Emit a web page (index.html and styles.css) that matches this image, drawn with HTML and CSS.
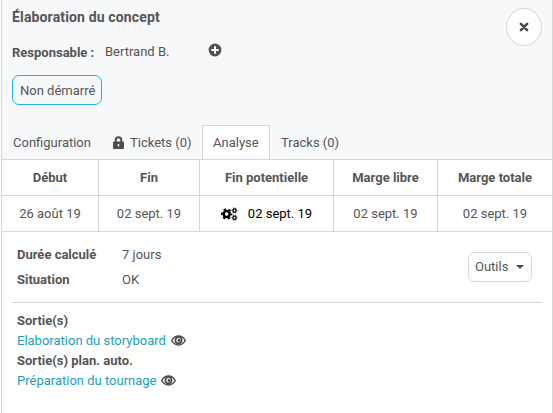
FILE: index.html
```html
<!DOCTYPE html>
<html lang="fr">
<head>
<meta charset="utf-8">
<title>Élaboration du concept</title>
<link rel="stylesheet" href="styles.css">
</head>
<body>
<svg width="0" height="0" class="defs">
  <symbol id="eye" viewBox="0 0 15 11"><path d="M.8 5.500C2.200 2.700 4.600 1.100 7.500 1.100s5.300 1.600 6.700 4.400c-1.400 2.800-3.800 4.400-6.700 4.400S2.200 8.300 .8 5.500z" fill="none" stroke="#4d4d4d" stroke-width="1.500"/><circle cx="7.500" cy="5.300" r="3.100" fill="none" stroke="#4d4d4d" stroke-width="1.700"/><circle cx="8" cy="5.500" r="1.400"/></symbol>
</svg>
<main class="panel">
  <header class="head">
    <div class="head-top">
      <div>
        <h1 class="title">Élaboration du concept</h1>
        <div class="owner">
          <span class="owner-label">Responsable :</span>
          <span class="owner-name">Bertrand B.</span>
          <svg class="plus" viewBox="0 0 14 14"><circle cx="7" cy="7" r="6.400"/><path d="M7 3.300v7.400M3.300 7h7.400"/></svg>
        </div>
      </div>
      <button class="close" aria-label="Fermer"><svg viewBox="0 0 10 10"><path d="M1.900 1.900l6.200 6.200M8.100 1.900L1.900 8.100"/></svg></button>
    </div>
    <span class="status">Non démarré</span>
    <nav class="tabs">
      <a class="tab">Configuration</a>
      <a class="tab tab-lock"><svg class="lock" viewBox="0 0 11 13"><path fill-rule="evenodd" d="M1.700 5.500V4a3.800 3.800 0 0 1 7.600 0v1.500h.500a1.200 1.200 0 0 1 1.200 1.200v5.100A1.200 1.200 0 0 1 9.800 13H1.200A1.200 1.200 0 0 1 0 11.800V6.700a1.200 1.200 0 0 1 1.200-1.200zM3.700 5.500h3.600V4a1.800 1.800 0 0 0-3.600 0zM4.800 8v2.500h1.400V8z"/></svg>Tickets (0)</a>
      <a class="tab active">Analyse</a>
      <a class="tab">Tracks (0)</a>
    </nav>
  </header>
  <table class="dates">
    <colgroup><col class="c1"><col class="c2"><col class="c3"><col class="c4"><col class="c5"></colgroup>
    <tr><th>Début</th><th>Fin</th><th>Fin potentielle</th><th>Marge libre</th><th>Marge totale</th></tr>
    <tr><td>26 août 19</td><td>02 sept. 19</td>
      <td class="auto"><svg class="cogs" viewBox="0 0 17 14"><g fill="none" stroke="#000"><circle cx="5.700" cy="7" r="3" stroke-width="2.600"/><circle cx="5.700" cy="7" r="4.800" stroke-width="1.800" stroke-dasharray="2.500 2.527" stroke-dashoffset="1.250"/><circle cx="13.500" cy="3.500" r="1.600" stroke-width="1.300"/><circle cx="13.500" cy="3.500" r="2.500" stroke-width="1" stroke-dasharray="1.300 1.318" stroke-dashoffset=".65"/><circle cx="13.500" cy="10.700" r="1.600" stroke-width="1.300"/><circle cx="13.500" cy="10.700" r="2.500" stroke-width="1" stroke-dasharray="1.300 1.318" stroke-dashoffset=".65"/></g></svg>02 sept. 19</td>
      <td>02 sept. 19</td><td>02 sept. 19</td></tr>
  </table>
  <section class="summary">
    <dl class="facts">
      <dt>Durée calculé</dt><dd>7 jours</dd>
      <dt>Situation</dt><dd>OK</dd>
    </dl>
    <button class="tools">Outils<i class="caret"></i></button>
  </section>
  <section class="outputs">
    <h2>Sortie(s)</h2>
    <p><a>Elaboration du storyboard</a><svg class="eye"><use href="#eye"/></svg></p>
    <h2>Sortie(s) plan. auto.</h2>
    <p><a>Préparation du tournage</a><svg class="eye"><use href="#eye"/></svg></p>
  </section>
</main>
</body>
</html>
```
FILE: styles.css
```css
* { box-sizing: border-box; }
body {
  margin: 0;
  padding-left: 1px;
  background: #fff;
  color: #555;
  font: 13px/20px Roboto, sans-serif;
}
.defs { position: absolute; }
.panel {
  width: 552px;
  height: 413px;
  border: solid #d6d7d9;
  border-width: 0 1px;
  overflow: hidden;
}
.head {
  display: flex;
  flex-direction: column;
  height: 160px;
  background: #f6f8fa;
  border-bottom: 1px solid #d6d7d9;
}
.head-top {
  display: flex;
  justify-content: space-between;
  height: 76px;
  padding: 7px 10px 0 10px;
}
h1, h2, p, dl, dd { margin: 0; }
.title { font-size: 14px; line-height: 20px; font-weight: 700; letter-spacing: 0.15px; }
.owner { display: flex; align-items: center; margin-top: 14px; }
.owner-label { width: 93px; font-weight: 700; padding-top: 2px; }
.owner-name { width: 102.5px; }
.plus { width: 14px; height: 14px; margin-top: -4px; }
.plus circle { fill: #505050; }
.plus path { fill: none; stroke: #fff; stroke-width: 2; }
button {
  padding: 0;
  background: #fff;
  border: 1px solid #d6d7d9;
  color: inherit;
  font: inherit;
}
.close {
  display: flex;
  align-items: center;
  justify-content: center;
  width: 36px;
  height: 38px;
  margin-top: 1px;
  border-radius: 50%;
}
.close svg { width: 10px; height: 10px; margin-top: -1px; }
.close path { fill: none; stroke: #4a4a4a; stroke-width: 2.6; stroke-linecap: round; }
.status {
  width: 90px;
  height: 30px;
  margin-left: 10px;
  padding-left: 7px;
  border: 1px solid #1fb5d6;
  border-radius: 7px;
  line-height: 29px;
}
.tabs { display: flex; margin-top: 19px; height: 35px; padding-top: 1px; }
.tab { padding: 0 11px; line-height: 33px; border: 1px solid transparent; border-bottom: 0; white-space: nowrap; }
.tab:first-child { width: 100px; padding: 0 0 0 10px; }
.tab-lock { display: flex; align-items: center; width: 100px; padding: 0 0 0 10px; }
.lock { width: 11px; height: 13px; margin-right: 6px; fill: #4d4d4d; }
.tab.active { background: #fff; border-color: #d6d7d9; width: 68px; padding: 0 10px; }
.tab:last-child { padding-left: 10px; }
.dates { width: 550px; border-collapse: separate; border-spacing: 0; table-layout: fixed; }
.c1 { width: 97px; }
.c2 { width: 101px; }
.c3 { width: 134px; }
.c4 { width: 104px; }
.c5 { width: 114px; }
th, td { height: 36px; padding: 0; text-align: center; border: solid #d6d7d9; border-width: 0 1px 1px 0; }
th:last-child, td:last-child { border-right: 0; }
.auto { color: #000; }
.cogs { width: 17px; height: 14px; margin-right: 10px; vertical-align: -3px; }
.summary {
  display: flex;
  justify-content: space-between;
  margin: 0 10px;
  height: 71px;
  padding: 10px 10px 0 5px;
  border-bottom: 1px solid #d6d7d9;
}
.facts { display: grid; grid-template-columns: 105px auto; grid-auto-rows: 25px; line-height: 25px; }
dt { font-weight: 700; }
.tools {
  display: flex;
  align-items: center;
  width: 64px;
  height: 30px;
  margin-top: 10px;
  padding-left: 6px;
  border-radius: 7px;
}
.caret { margin-left: 8px; border: 4px solid transparent; border-top-color: #4d4d4d; border-bottom: 0; }
.outputs { padding: 8px 15px; }
.outputs h2 { font-size: 13px; line-height: 20px; }
.outputs p { display: flex; align-items: center; height: 20px; }
.outputs a { color: #1a9dbf; }
.eye { width: 15px; height: 11px; margin: -1px 0 0 5px; fill: #4d4d4d; }
```
